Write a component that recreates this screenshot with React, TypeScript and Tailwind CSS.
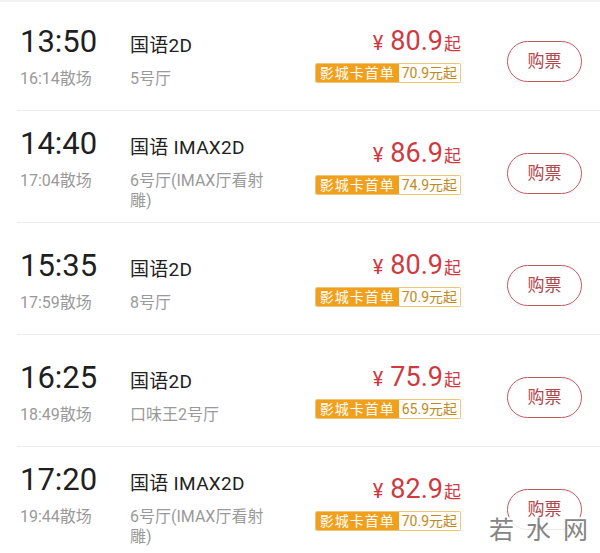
const font = {
  fontFamily: 'Roboto, "Noto Sans CJK SC", sans-serif',
};

interface Showtime {
  start: string;
  end: string;
  lang: string;
  hall: string;
  price: string;
  cardPrice: string;
}

const showtimes: Showtime[] = [
  { start: "13:50", end: "16:14", lang: "国语2D", hall: "5号厅", price: "80.9", cardPrice: "70.9" },
  { start: "14:40", end: "17:04", lang: "国语 IMAX2D", hall: "6号厅(IMAX厅看射雕)", price: "86.9", cardPrice: "74.9" },
  { start: "15:35", end: "17:59", lang: "国语2D", hall: "8号厅", price: "80.9", cardPrice: "70.9" },
  { start: "16:25", end: "18:49", lang: "国语2D", hall: "口味王2号厅", price: "75.9", cardPrice: "65.9" },
  { start: "17:20", end: "19:44", lang: "国语 IMAX2D", hall: "6号厅(IMAX厅看射雕)", price: "82.9", cardPrice: "70.9" },
];

function Row({ s }: { s: Showtime }) {
  return (
    <div className="ml-[17px] h-[112px] border-b border-[#ececec] flex items-start pt-[4px]">
      {/* left: times + hall */}
      <div className="self-center pl-[3px] grid grid-cols-[110px_142px] items-baseline gap-y-[9px]">
        <div className="text-[31px] leading-[36px] text-[#1f1f1f]">{s.start}</div>
        <div className="text-[19px] leading-[22px] tracking-[0.3px] text-[#222]">{s.lang}</div>
        <div className="text-[16px] leading-[20px] text-[#9a9a9a]">{s.end}散场</div>
        <div className="text-[16px] leading-[20px] text-[#9a9a9a]">{s.hall}</div>
      </div>

      {/* price */}
      <div className="ml-auto mt-[25px] flex flex-col items-end">
        <div className="flex items-baseline text-[#cf3a41] leading-none">
          <span className="text-[20px] mr-[7px]">¥</span>
          <span className="text-[27px]">{s.price}</span>
          <span className="text-[17px] ml-[1px]">起</span>
        </div>
        <div className="mt-[8px] flex h-[20px] rounded-[2px] border border-[#ecc676] overflow-hidden text-[14px] leading-[18px]">
          <span className="bg-[#f0a01c] text-white px-[4px] tracking-[1px]">影城卡首单</span>
          <span className="bg-white text-[#c08a22] px-[3px]">{s.cardPrice}元起</span>
        </div>
      </div>

      {/* buy button */}
      <button className="mt-[38px] ml-[46px] mr-[18px] w-[75px] h-[41px] rounded-full border-[1.5px] border-[#c2585c] text-[#b4464b] text-[17px] flex items-center justify-center">
        购票
      </button>
    </div>
  );
}

export default function App() {
  return (
    <div className="relative w-[600px] h-[553px] overflow-hidden bg-white" style={font}>
      <div className="h-[2px] bg-[#f3f3f3]" />
      <div className="-mt-[3px]">
        {showtimes.map((s) => (
          <Row key={s.start} s={s} />
        ))}
      </div>

      {/* watermark */}
      <div className="absolute right-0 bottom-[8px] bg-white/85 text-[#858585] text-[25px] leading-[28px] tracking-[12px]">
        若水网
      </div>
    </div>
  );
}
